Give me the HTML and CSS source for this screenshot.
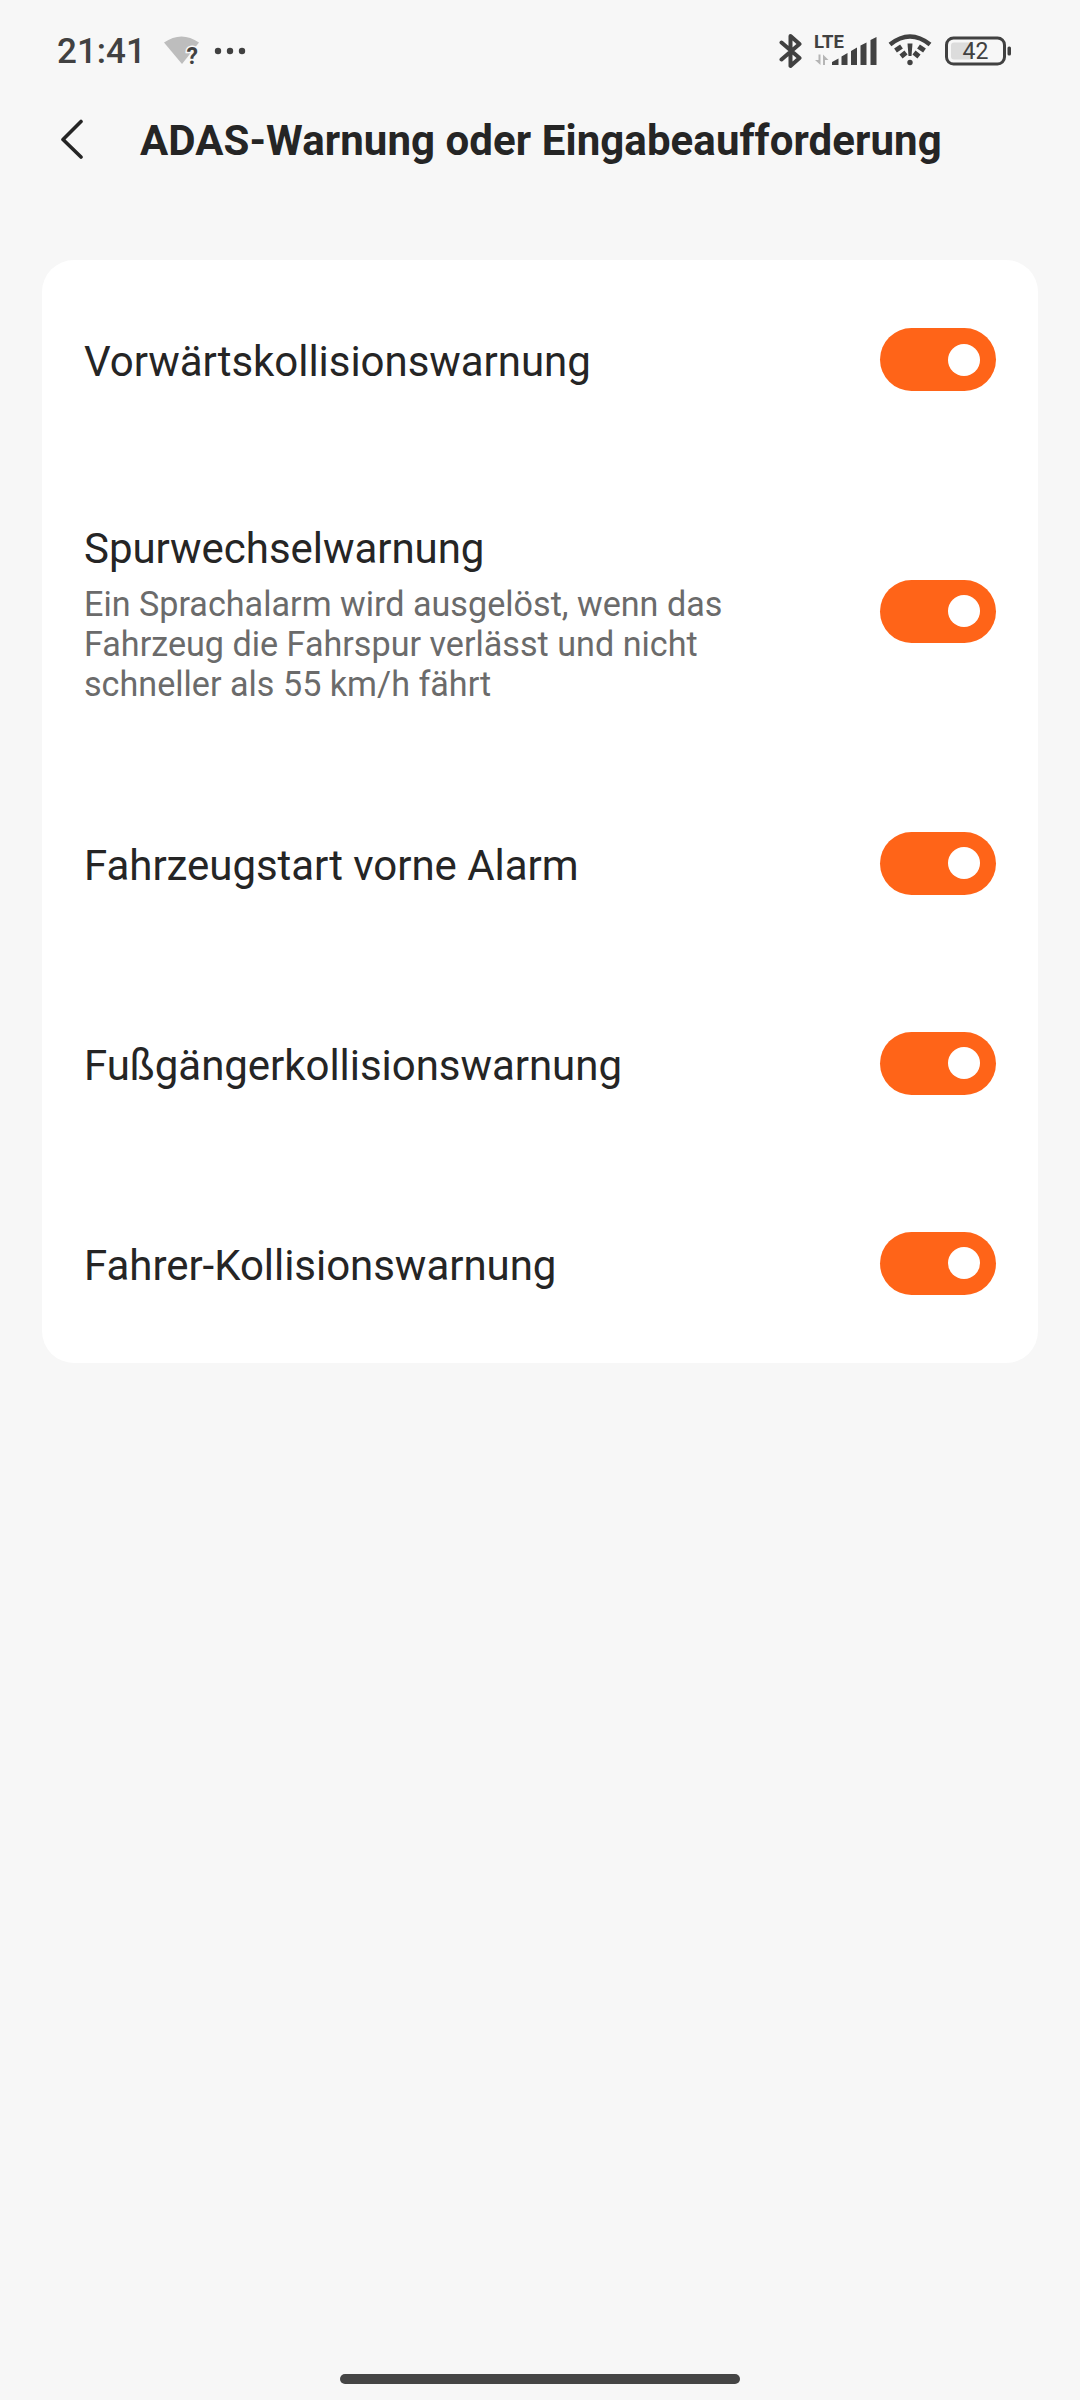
FILE: index.html
```html
<!DOCTYPE html>
<html lang="de">

<head>
    <meta charset="UTF-8">
    <meta name="viewport" content="width=device-width, initial-scale=1.0">
    <title>ADAS-Warnung</title>
    <link rel="stylesheet" href="styles.css">
</head>

<body>
    <div class="status">
        <div class="status-left">
            <span class="time">21:41</span>
            <svg class="wifi-unknown" width="38" height="38" viewBox="0 -4 38 38">
                <path d="M0 6.500Q17.500 -5.500 35 6.500L18 28Z" fill="#bdbdbd" />
                <text x="22.500" y="27.500">?</text>
            </svg>
            <svg class="dots" width="32" height="8" viewBox="0 0 32 8">
                <circle cx="4" cy="4" r="3.200" />
                <circle cx="16" cy="4" r="3.200" />
                <circle cx="28" cy="4" r="3.200" />
            </svg>
        </div>
        <div class="status-right">
            <svg width="24" height="38" viewBox="0 0 24 38" fill="none" stroke="#414141" stroke-width="4" stroke-linejoin="round" stroke-linecap="round">
                <path d="M2.500 10.500L20.500 26L11.500 34V4L20.500 12L2.500 27.500" />
            </svg>
            <svg class="signal" width="64" height="42" viewBox="0 -4 64 42">
                <text x="0" y="13.500">LTE</text>
                <path d="M4.500 20.500H6.500V31L1 26H4.500ZM9 31H11V26H14.500L9 20.500Z" fill="#b5b5b5" />
                <path d="M18 31V28L24.500 24.500V31ZM27.500 31V22.500L33.500 19V31ZM37 31V17L43 13.500V31ZM46.500 31V11.500L52.500 8.500V31ZM56.500 31V6L62.500 3V31Z" />
            </svg>
            <svg class="wifi" width="44" height="34" viewBox="0 0 44 34">
                <g fill="none" stroke="#414141">
                    <path d="M2 10.500Q22 -5.500 42 10.500" stroke-width="4.500" />
                    <path d="M7.500 16.500L13.500 12.500M36.500 16.500L30.500 12.500M13 22.500L18 18.500M31 22.500L26 18.500" stroke-width="5" />
                </g>
                <path d="M19.500 9.500H24.500L23.500 22H20.500Z" />
                <circle cx="22" cy="28.500" r="2.700" />
            </svg>
            <svg class="battery" width="68" height="30" viewBox="0 0 68 30">
                <rect x="7" y="6.500" width="22" height="17" rx="3" fill="#dcdcdc" />
                <rect x="2.500" y="2" width="58" height="26" rx="7" fill="none" stroke="#414141" stroke-width="3" />
                <rect x="63.500" y="10.500" width="3.500" height="9" rx="1.500" fill="#414141" />
                <text x="18.500" y="23">42</text>
            </svg>
        </div>
    </div>

    <div class="header">
        <svg class="back" width="24" height="42" viewBox="0 0 24 42">
            <path d="M21 2.500L3 20.500L21 38" />
        </svg>
        <h1>ADAS-Warnung oder Eingabeaufforderung</h1>
    </div>

    <ul class="card">
        <li class="item item-first">
            <div class="name">Vorwärtskollisionswarnung</div>
            <div class="switch"></div>
        </li>
        <li class="item item-tall">
            <div class="text">
                <div class="name">Spurwechselwarnung</div>
                <div class="desc">Ein Sprachalarm wird ausgelöst, wenn das<br>Fahrzeug die Fahrspur verlässt und nicht<br>schneller als 55 km/h fährt</div>
            </div>
            <div class="switch"></div>
        </li>
        <li class="item">
            <div class="name">Fahrzeugstart vorne Alarm</div>
            <div class="switch"></div>
        </li>
        <li class="item">
            <div class="name">Fußgängerkollisionswarnung</div>
            <div class="switch"></div>
        </li>
        <li class="item">
            <div class="name">Fahrer-Kollisionswarnung</div>
            <div class="switch"></div>
        </li>
    </ul>

    <div class="home-bar"></div>
</body>

</html>
```

FILE: styles.css
```css
* {
    box-sizing: border-box;
}

body {
    margin: 0;
    height: 2400px;
    display: flex;
    flex-direction: column;
    background-color: #f7f7f7;
    color: #252525;
    font-family: Roboto, "Liberation Sans", sans-serif;
}

svg {
    display: block;
    flex: none;
}

.status {
    height: 100px;
    padding: 2px 68px 0 57px;
    display: flex;
    justify-content: space-between;
    align-items: center;
    color: #414141;
    fill: #414141;
}

.status-left,
.status-right {
    display: flex;
    align-items: center;
}

.time {
    width: 107px;
    font-size: 35px;
    font-weight: 500;
    white-space: nowrap;
}

.wifi-unknown text {
    font-size: 23px;
    font-weight: 700;
    stroke: #f7f7f7;
    stroke-width: 3px;
    paint-order: stroke;
}

.dots {
    margin-left: 12px;
}

.signal {
    margin-left: 11px;
}

.signal text {
    font-size: 18.5px;
    font-weight: 700;
}

.wifi {
    margin-left: 10px;
}

.battery {
    margin-left: 12px;
}

.battery text {
    font-size: 23px;
    font-weight: 400;
}

.header {
    height: 80px;
    padding-left: 60px;
    display: flex;
    align-items: center;
}

.back {
    fill: none;
    stroke: #252525;
    stroke-width: 3.6;
    stroke-linecap: round;
    stroke-linejoin: round;
}

.header h1 {
    margin: 0 0 0 56px;
    font-size: 42px;
    font-weight: 700;
    letter-spacing: 0.07px;
    white-space: nowrap;
}

.card {
    list-style: none;
    margin: 80px 42px 0;
    padding: 0;
    border-radius: 32px;
    background-color: #fff;
}

.item {
    height: 200px;
    padding: 0 42px;
    display: flex;
    justify-content: space-between;
    align-items: center;
}

.item-first {
    height: 199px;
}

.item-tall {
    height: 304px;
}

.name {
    padding-top: 5px;
    font-size: 42px;
    line-height: 50px;
    letter-spacing: -0.04px;
    white-space: nowrap;
}

.desc {
    margin-top: 10px;
    font-size: 34.15px;
    line-height: 40px;
    color: #6b6b6b;
    white-space: nowrap;
}

.item-tall .name {
    padding-top: 6px;
}

.switch {
    width: 116px;
    height: 63px;
    padding-right: 16px;
    display: flex;
    justify-content: flex-end;
    align-items: center;
    border-radius: 32px;
    background-color: #ff6418;
}

.switch::after {
    content: "";
    width: 32px;
    height: 32px;
    border-radius: 50%;
    background-color: #fff;
}

.home-bar {
    width: 400px;
    height: 10px;
    margin: auto auto 16px;
    border-radius: 5px;
    background-color: #454545;
}
```
